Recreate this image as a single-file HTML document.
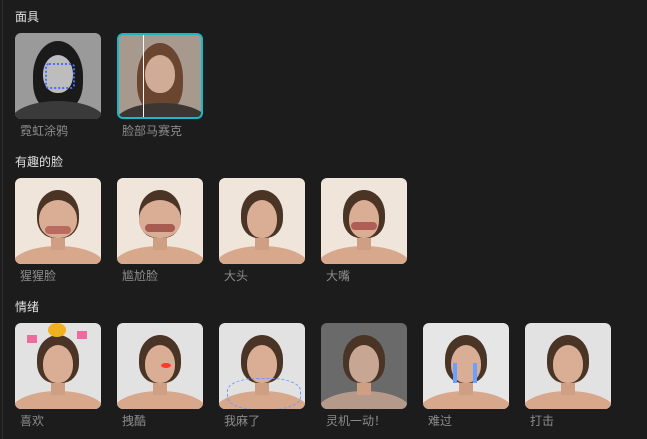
<!DOCTYPE html>
<html><head><meta charset="utf-8"><style>
body{margin:0;width:647px;height:439px;background:#1c1c1c;position:relative;overflow:hidden;font-family:"Liberation Sans","Noto Sans CJK SC",sans-serif}
.vl{position:absolute;left:2px;top:0;width:1px;height:439px;background:#2e2e2e}
.h{position:absolute;left:15px;color:#e0e0e0;font-size:12px;line-height:14px}
.t{position:absolute;width:86px;height:86px;border-radius:6px;overflow:hidden}
.l{position:absolute;color:#8c8c8c;font-size:12px;line-height:14px}
.hair{position:absolute;left:22px;top:12px;width:42px;height:48px;border-radius:50% 50% 40% 40%;background:#4a3426}
.face{position:absolute;left:28px;top:22px;width:30px;height:38px;border-radius:50% 50% 46% 46%;background:#d9ae94}
.sh{position:absolute;left:-4px;top:68px;width:94px;height:40px;border-radius:50% 50% 0 0;background:#d7a88c}
.neck{position:absolute;left:36px;top:52px;width:14px;height:20px;background:#cf9f84}
</style></head><body>
<div class="vl"></div>
<div class="h" style="top:10px">面具</div>
<div class="h" style="top:155px">有趣的脸</div>
<div class="h" style="top:300px">情绪</div>

<div class="t" style="left:15px;top:33px;background:#9a9a9a">
<div class="hair" style="left:18px;top:8px;width:50px;height:70px;background:#1a1a1a"></div>
<div class="face" style="background:#bdbdbd"></div>
<div class="sh" style="background:#3a3a3a"></div>
<div style="position:absolute;left:30px;top:30px;width:26px;height:22px;border:2px dotted #4a6cff;border-radius:4px"></div>
</div>
<div class="t" style="left:117px;top:33px;background:#a8998f;border:2px solid #19b8c6;width:82px;height:82px">
<div class="hair" style="left:18px;top:8px;width:46px;height:70px;background:#6a4530"></div>
<div class="face" style="left:26px;top:20px;background:#d0ab95"></div>
<div class="sh" style="background:#3c3632"></div>
<div style="position:absolute;left:24px;top:0;width:1px;height:82px;background:#fff"></div>
</div>
<div class="l" style="left:20px;top:124px">霓虹涂鸦</div>
<div class="l" style="left:122px;top:124px">脸部马赛克</div>

<div class="t" style="left:15px;top:178px;background:#efe5da"><div class="sh"></div><div class="neck"></div><div class="hair"></div><div class="face" style="left:24px;width:38px"></div><div style="position:absolute;left:30px;top:48px;width:26px;height:8px;border-radius:4px;background:#b86b5e"></div></div>
<div class="t" style="left:117px;top:178px;background:#efe5da"><div class="sh"></div><div class="neck"></div><div class="hair"></div><div class="face" style="left:22px;width:42px"></div><div style="position:absolute;left:28px;top:46px;width:30px;height:8px;border-radius:4px;background:#a65c50"></div></div>
<div class="t" style="left:219px;top:178px;background:#efe5da"><div class="sh"></div><div class="neck"></div><div class="hair"></div><div class="face"></div></div>
<div class="t" style="left:321px;top:178px;background:#efe5da"><div class="sh"></div><div class="neck"></div><div class="hair"></div><div class="face"></div><div style="position:absolute;left:30px;top:44px;width:26px;height:8px;border-radius:4px;background:#b05d55"></div></div>
<div class="l" style="left:20px;top:269px">猩猩脸</div>
<div class="l" style="left:122px;top:269px">尴尬脸</div>
<div class="l" style="left:224px;top:269px">大头</div>
<div class="l" style="left:326px;top:269px">大嘴</div>

<div class="t" style="left:15px;top:323px;background:#e2e2e2"><div class="sh"></div><div class="neck"></div><div class="hair"></div><div class="face"></div><div style="position:absolute;left:33px;top:0;width:18px;height:14px;border-radius:50%;background:#f0b020"></div><div style="position:absolute;left:12px;top:12px;width:10px;height:8px;background:#f06aa0"></div><div style="position:absolute;left:62px;top:8px;width:10px;height:8px;background:#f06aa0"></div></div>
<div class="t" style="left:117px;top:323px;background:#e2e2e2"><div class="sh"></div><div class="neck"></div><div class="hair"></div><div class="face"></div><div style="position:absolute;left:44px;top:40px;width:10px;height:5px;border-radius:50%;background:#ff3a2a"></div></div>
<div class="t" style="left:219px;top:323px;background:#e2e2e2"><div class="sh"></div><div class="neck"></div><div class="hair"></div><div class="face"></div><div style="position:absolute;left:8px;top:55px;width:72px;height:30px;border:1px dashed #6f9cff;border-radius:40%"></div></div>
<div class="t" style="left:321px;top:323px;background:#6a6a6a"><div class="sh" style="background:#b59a8a"></div><div class="neck"></div><div class="hair"></div><div class="face" style="background:#c8a694"></div></div>
<div class="t" style="left:423px;top:323px;background:#e6e6e6"><div class="sh"></div><div class="neck"></div><div class="hair"></div><div class="face"></div><div style="position:absolute;left:30px;top:40px;width:4px;height:20px;background:#6aa0ff"></div><div style="position:absolute;left:50px;top:40px;width:4px;height:20px;background:#6aa0ff"></div></div>
<div class="t" style="left:525px;top:323px;background:#e2e2e2"><div class="sh"></div><div class="neck"></div><div class="hair"></div><div class="face"></div></div>
<div class="l" style="left:20px;top:414px">喜欢</div>
<div class="l" style="left:122px;top:414px">拽酷</div>
<div class="l" style="left:224px;top:414px">我麻了</div>
<div class="l" style="left:326px;top:414px">灵机一动！</div>
<div class="l" style="left:428px;top:414px">难过</div>
<div class="l" style="left:530px;top:414px">打击</div>
</body></html>
